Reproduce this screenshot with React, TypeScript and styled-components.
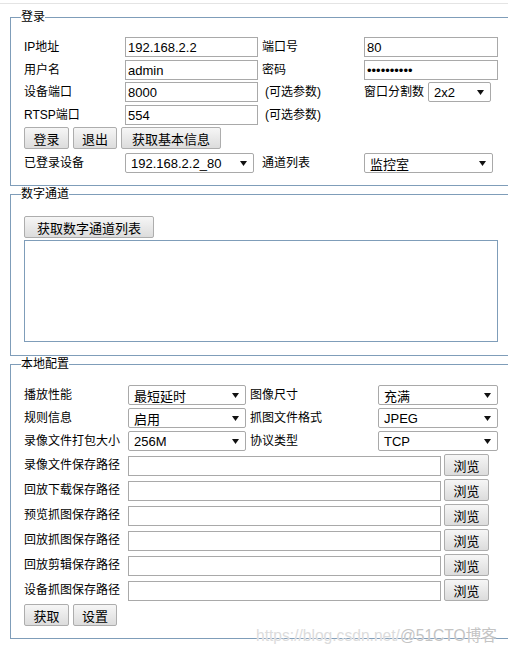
import React from 'react';
import styled, { createGlobalStyle } from 'styled-components';

const FONT = '"Liberation Sans", "Noto Sans CJK SC", sans-serif';

const Global = createGlobalStyle`
  html, body { margin: 0; padding: 0; overflow: hidden; background: #fff; }
  body { font-family: ${FONT}; color: #000; }
`;

const Page = styled.div`
  position: relative;
  width: 508px;
  height: 654px;
  box-sizing: border-box;
  padding: 3px 0 0 10px;
  overflow: hidden;
`;

const TopRule = styled.div`
  height: 1px;
  margin: 0 0 5px -10px;
  background: #e4e4e4;
`;

const Fieldset = styled.fieldset<{ $pt: number; $pb: number }>`
  margin: 0 -30px 0 0;
  padding: ${p => p.$pt}px 0 ${p => p.$pb}px 10px;
  border: 1px solid #7f9db9;
  min-width: 0;
`;

const Legend = styled.legend`
  padding: 0;
  font-size: 12px;
  line-height: 16px;
`;

const Stack = styled.div<{ $gap: number }>`
  display: flex;
  flex-direction: column;
  gap: ${p => p.$gap}px;
  padding-left: 3px;
`;

const LoginRow = styled.div<{ $mt?: number }>`
  display: grid;
  grid-template-columns: 101px 133px 106px 134px;
  align-items: center;
  height: 20px;
  margin-top: ${p => p.$mt ?? 0}px;
`;

const ConfigRow = styled.div`
  display: grid;
  grid-template-columns: 104px 118px 132px 120px;
  align-items: center;
  height: 20px;
`;

const PathRow = styled.div`
  display: grid;
  grid-template-columns: 104px 316px 45px;
  align-items: end;
  height: 22px;
`;

const Label = styled.span<{ $pl?: number }>`
  font-size: 12px;
  line-height: 20px;
  white-space: nowrap;
  padding-left: ${p => p.$pl ?? 0}px;
  align-self: center;
`;

const TextInput = styled.input<{ $w: number }>`
  box-sizing: border-box;
  width: ${p => p.$w}px;
  height: 20px;
  margin: 0;
  padding: 0 2px;
  border: 1px solid #a9a9a9;
  border-radius: 0;
  font: 13px ${FONT};
  color: #000;
  background: #fff;
  outline: none;
`;

const SelectBox = styled.div<{ $w: number }>`
  box-sizing: border-box;
  width: ${p => p.$w}px;
  height: 20px;
  display: flex;
  align-items: center;
  justify-content: space-between;
  padding: 0 6px 0 5px;
  border: 1px solid #a9a9a9;
  border-radius: 2px;
  background: #fff;
  font-size: 13px;
  white-space: nowrap;
`;

const Inline = styled.div`
  display: flex;
  align-items: center;
  gap: 4px;
`;

const ButtonBar = styled.div<{ $mt?: number }>`
  display: flex;
  gap: 4px;
  height: 22px;
  margin-top: ${p => p.$mt ?? 0}px;
`;

const Btn = styled.button<{ $w: number }>`
  box-sizing: border-box;
  width: ${p => p.$w}px;
  height: 22px;
  margin: 0;
  padding: 0;
  border: 1px solid #adadad;
  border-radius: 2px;
  background: linear-gradient(#f6f6f6, #dcdcdc);
  font: 13px ${FONT};
  color: #000;
  white-space: nowrap;
`;

const ListBox = styled.div`
  box-sizing: border-box;
  width: 474px;
  height: 102px;
  margin-top: 2px;
  border: 1px solid #7f9db9;
  background: #fff;
`;

const Watermark = styled.div`
  position: absolute;
  left: 256px;
  top: 623px;
  font: 15.6px ${FONT};
  white-space: nowrap;
  color: #dcdcdc;
  text-shadow: 0 0 1px #fff;
  pointer-events: none;
`;

const Mark = styled.span`
  color: #c4c4c4;
`;

const Arrow = () => (
  <svg width="7" height="5" viewBox="0 0 7 5" aria-hidden>
    <polygon points="0,0 7,0 3.5,5" fill="#111" />
  </svg>
);

const Select = ({ w, value }: { w: number; value: string }) => (
  <SelectBox $w={w}>
    <span>{value}</span>
    <Arrow />
  </SelectBox>
);

const paths = [
  '录像文件保存路径',
  '回放下载保存路径',
  '预览抓图保存路径',
  '回放抓图保存路径',
  '回放剪辑保存路径',
  '设备抓图保存路径',
];

export default function App() {
  return (
    <>
      <Global />
      <Page>
        <TopRule />
        <Fieldset $pt={12} $pb={12}>
          <Legend>登录</Legend>
          <Stack $gap={0}>
            <LoginRow>
              <Label>IP地址</Label>
              <TextInput $w={133} defaultValue="192.168.2.2" />
              <Label $pl={4}>端口号</Label>
              <TextInput $w={134} defaultValue="80" />
            </LoginRow>
            <LoginRow $mt={3}>
              <Label>用户名</Label>
              <TextInput $w={133} defaultValue="admin" />
              <Label $pl={4}>密码</Label>
              <TextInput $w={134} type="password" defaultValue="1234567890" />
            </LoginRow>
            <LoginRow $mt={2}>
              <Label>设备端口</Label>
              <TextInput $w={133} defaultValue="8000" />
              <Label $pl={7}>(可选参数)</Label>
              <Inline>
                <Label>窗口分割数</Label>
                <Select w={63} value="2x2" />
              </Inline>
            </LoginRow>
            <LoginRow $mt={3}>
              <Label>RTSP端口</Label>
              <TextInput $w={133} defaultValue="554" />
              <Label $pl={7}>(可选参数)</Label>
              <span />
            </LoginRow>
            <ButtonBar $mt={2}>
              <Btn $w={45}>登录</Btn>
              <Btn $w={44}>退出</Btn>
              <Btn $w={100}>获取基本信息</Btn>
            </ButtonBar>
            <LoginRow $mt={4}>
              <Label>已登录设备</Label>
              <Select w={129} value="192.168.2.2_80" />
              <Label $pl={4}>通道列表</Label>
              <Select w={129} value="监控室" />
            </LoginRow>
          </Stack>
        </Fieldset>

        <Fieldset $pt={14} $pb={13}>
          <Legend>数字通道</Legend>
          <Stack $gap={0}>
            <ButtonBar>
              <Btn $w={130}>获取数字通道列表</Btn>
            </ButtonBar>
            <ListBox />
          </Stack>
        </Fieldset>

        <Fieldset $pt={13} $pb={12}>
          <Legend>本地配置</Legend>
          <Stack $gap={3}>
            <ConfigRow>
              <Label>播放性能</Label>
              <Select w={118} value="最短延时" />
              <Label $pl={4}>图像尺寸</Label>
              <Select w={120} value="充满" />
            </ConfigRow>
            <ConfigRow>
              <Label>规则信息</Label>
              <Select w={118} value="启用" />
              <Label $pl={4}>抓图文件格式</Label>
              <Select w={120} value="JPEG" />
            </ConfigRow>
            <ConfigRow>
              <Label>录像文件打包大小</Label>
              <Select w={118} value="256M" />
              <Label $pl={4}>协议类型</Label>
              <Select w={120} value="TCP" />
            </ConfigRow>
            {paths.map(p => (
              <PathRow key={p}>
                <Label>{p}</Label>
                <TextInput $w={313} />
                <Btn $w={45}>浏览</Btn>
              </PathRow>
            ))}
            <ButtonBar>
              <Btn $w={45}>获取</Btn>
              <Btn $w={44}>设置</Btn>
            </ButtonBar>
          </Stack>
        </Fieldset>

        <Watermark>
          https://blog.csdn.net/<Mark>@51CTO博客</Mark>
        </Watermark>
      </Page>
    </>
  );
}
